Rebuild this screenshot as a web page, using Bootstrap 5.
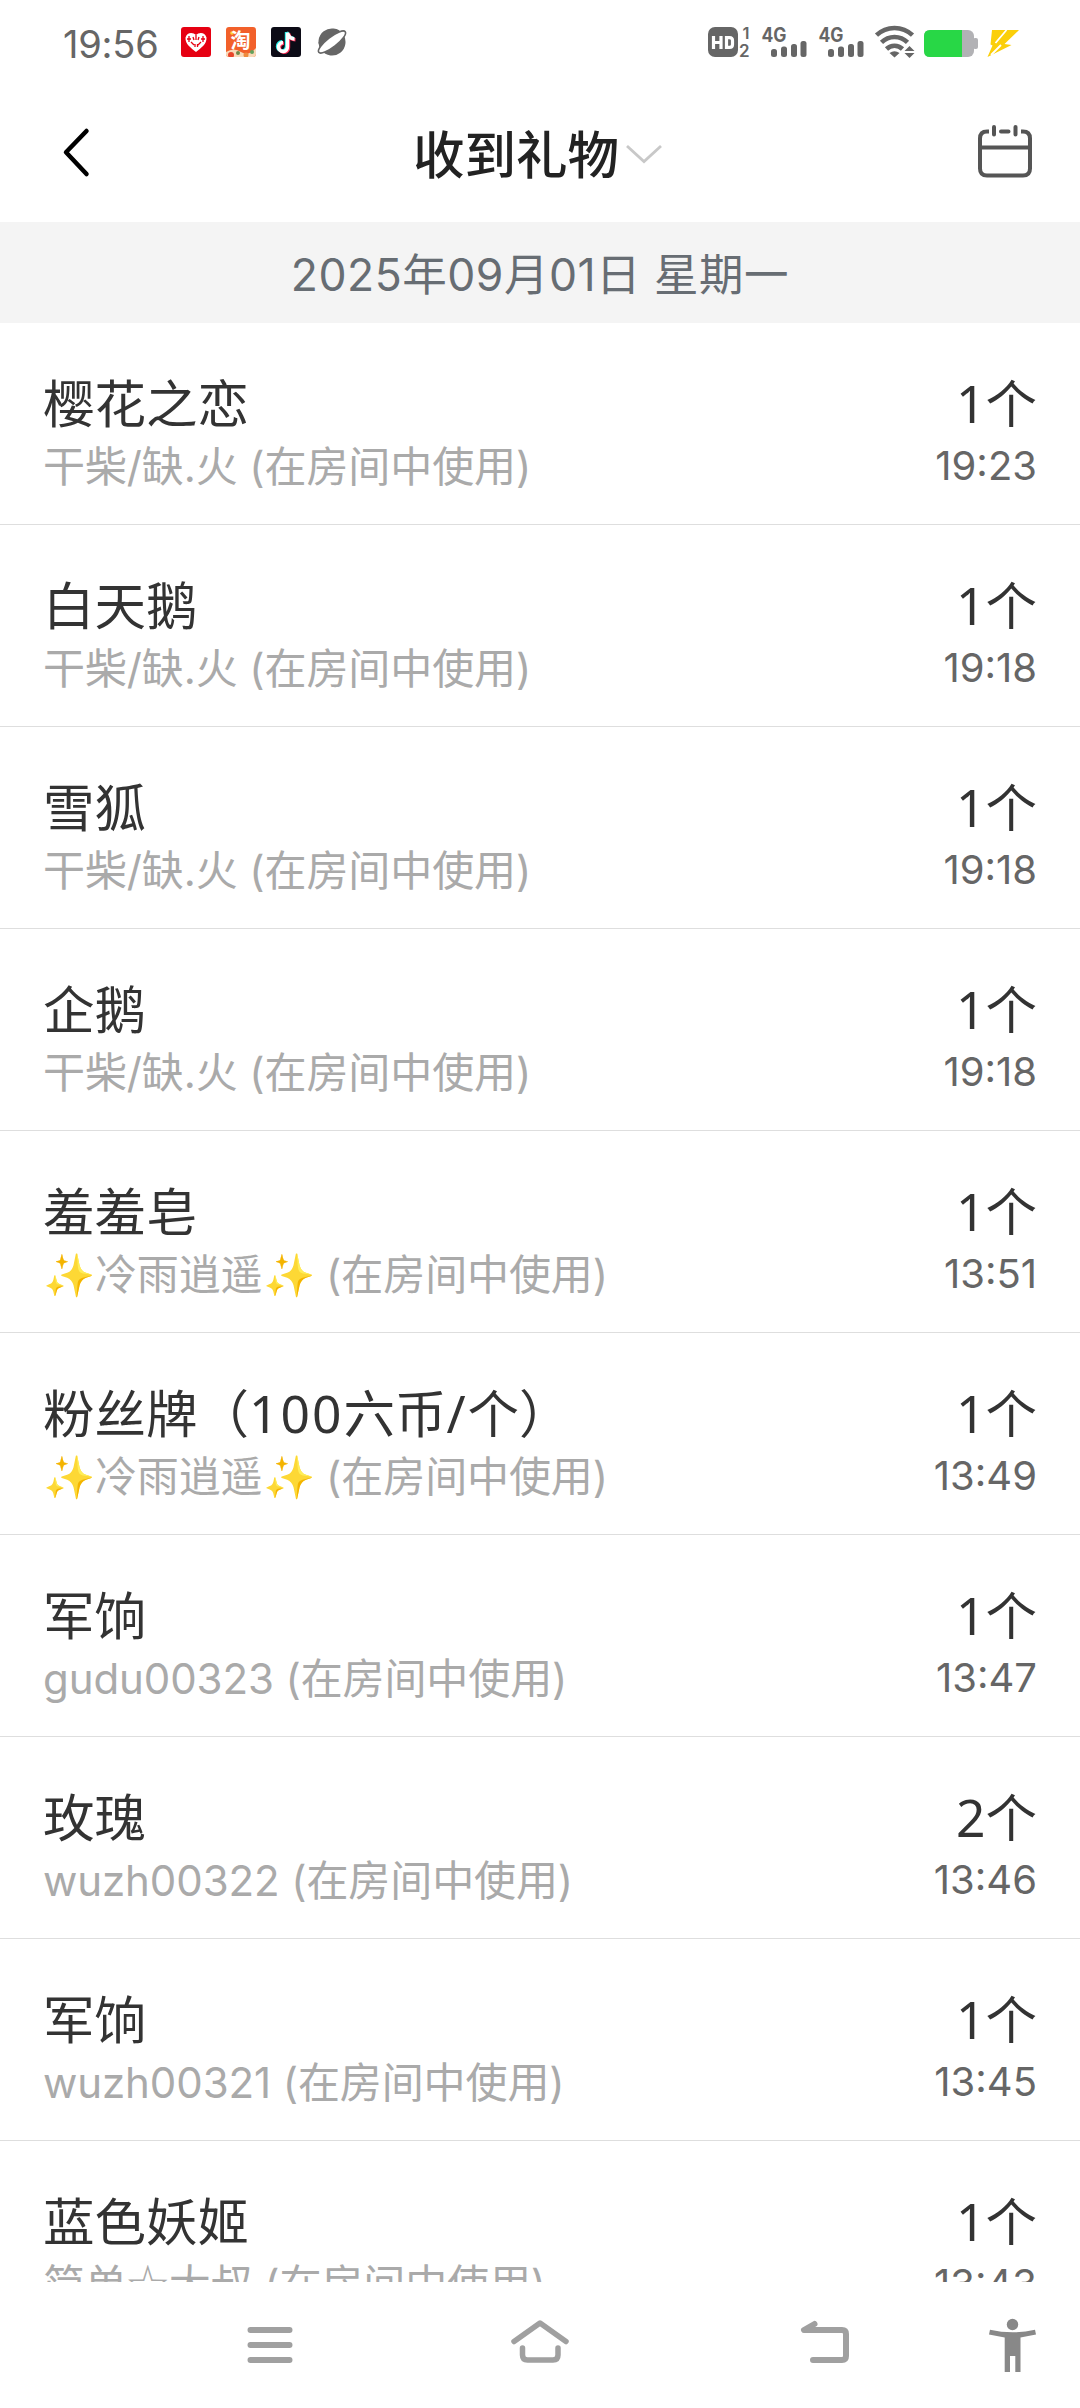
<!DOCTYPE html>
<html lang="zh-CN">
<head>
<meta charset="utf-8">
<meta name="viewport" content="width=device-width, initial-scale=1">
<title>收到礼物</title>
<link rel="stylesheet" href="https://cdn.jsdelivr.net/npm/bootstrap@5.3.0/dist/css/bootstrap.min.css">
<style>
  body { font-family: Inter, "Noto Sans CJK SC", sans-serif; background: #fff; }
  .screen { width: 1080px; height: 2408px; }
  .screen svg { display: block; flex: none; }
  .status-bar { height: 84px; padding: 0 61px 0 63px; color: #666; }
  .clock { font-size: 38px; line-height: 84px; letter-spacing: -.2px; margin-top: 3px; width: 118px; }
  .app-icons { gap: 15px; }
  .topbar { height: 138px; padding: 0 46px 0 56px; }
  .title-menu { padding: 4px 14px 0 0; }
  .page-title { font-size: 51.5px; font-weight: 500; line-height: 70px; color: #222; }
  .date-bar { height: 101px; background: #f4f4f4; color: #676d73; font-size: 44.5px; letter-spacing: .5px; line-height: 106px; }
  .gift-row { height: 202px; padding: 44px 43px 0; border-bottom: 1px solid #dedede; }
  .gift-name, .gift-count { font-family: "Noto Sans", "Noto Sans CJK SC", sans-serif; font-size: 51.5px; line-height: 72px; color: #333; }
  .wide-digits { letter-spacing: 2px; }
  .gift-from { font-size: 42px; letter-spacing: -.1px; line-height: 56px; color: #aaa; }
  .star-mark { font-family: "Noto Sans CJK SC", sans-serif; line-height: 1; }
  .gift-time { font-size: 40px; line-height: 53px; color: #666; }
  .nav-keys { height: 126px; }
</style>
</head>
<body>
<div class="screen d-flex flex-column overflow-hidden">
  <header class="status-bar d-flex align-items-center flex-shrink-0">
    <div class="clock">19:56</div>
    <div class="app-icons d-flex me-auto">
      <svg width="30" height="30" viewBox="0 0 30 30"><rect width="30" height="30" rx="3" fill="#e60012"/><path d="M15 25C10 21 4 17 4.500 10.500C6 5 12 5 15 8C18 5 24 5 25.500 10.500C26 17 20 21 15 25Z" fill="#fff"/><path d="M6 12H10M8 9V15M10 15L13 18M20 12H24M22 9V15M20 15L17 18M15 8V13M12 10L13 13M18 10L17 13M14 17V20M16.500 17V20" stroke="#e60012" stroke-width="1.300"/></svg>
      <svg width="30" height="30" viewBox="0 0 30 30"><defs><clipPath id="tb"><rect width="30" height="30" rx="3"/></clipPath></defs><g clip-path="url(#tb)"><rect width="30" height="30" fill="#f2602a"/><path d="M0 25Q8 20 15 25T30 21V30H0Z" fill="#f9d9b8"/><circle cx="5" cy="28" r="3" fill="#e8452a"/><circle cx="12" cy="26" r="2" fill="#6f8b4a"/><circle cx="20" cy="28" r="2.500" fill="#ef8a3c"/><circle cx="26" cy="25" r="2" fill="#62a15c"/><circle cx="6" cy="6" r="1.800" fill="#ffd33c"/><text x="4.500" y="20.500" font-size="20" font-weight="700" fill="#fff">淘</text></g></svg>
      <svg width="30" height="30" viewBox="0 0 30 30"><rect width="30" height="30" rx="3" fill="#0c0b16"/><g fill="none" stroke-width="3.400"><path d="M15.500 5V19A4.500 4.500 0 1 1 11 14.800M15.500 5Q17 11 22.500 11.300" stroke="#25f4ee"/><path d="M17.500 6.500V20.500A4.500 4.500 0 1 1 13 16.300M17.500 6.500Q19 12.500 24.500 12.800" stroke="#fe2c55"/><path d="M16.500 5.700V19.700A4.500 4.500 0 1 1 12 15.500M16.500 5.700Q18 11.700 23.500 12" stroke="#fff"/></g></svg>
      <svg width="32" height="30" viewBox="0 0 32 30"><g transform="rotate(-38 16 15)"><circle cx="16" cy="15" r="13.500" fill="#666"/><ellipse cx="16" cy="15" rx="16.800" ry="5" fill="#fff" stroke="#666" stroke-width="1.600"/><path d="M3.500 10.500Q16 6.500 28.500 10.500L27 7H5Z" fill="#666"/></g></svg>
    </div>
    <svg width="312" height="50" viewBox="0 -8 312 50" fill="#666">
      <rect x="1" y="2" width="30" height="30" rx="7"/>
      <g fill="none" stroke="#fff" stroke-width="3.200"><path d="M6.500 11V24M14 11V24M6.500 17.500H14M19.500 12.600H22.500Q25.500 12.600 25.500 15.500V19.500Q25.500 22.400 22.500 22.400H19.500Z"/></g>
      <g font-weight="600" font-size="16.500"><text x="35.500" y="14">1</text><text x="32" y="32" font-size="17">2</text></g>
      <g id="sig"><text x="54.500" y="16.500" font-size="19.500" font-weight="700" textLength="25" lengthAdjust="spacingAndGlyphs">4G</text><rect x="64" y="24" width="6" height="8" rx="2.500"/><rect x="74" y="21.500" width="6" height="10.500" rx="2.500"/><rect x="84" y="19" width="6" height="13" rx="2.500"/><rect x="93.500" y="16" width="6" height="16" rx="2.500"/></g>
      <g transform="translate(57 0)"><text x="54.500" y="16.500" font-size="19.500" font-weight="700" textLength="25" lengthAdjust="spacingAndGlyphs">4G</text><rect x="64" y="24" width="6" height="8" rx="2.500"/><rect x="74" y="21.500" width="6" height="10.500" rx="2.500"/><rect x="84" y="19" width="6" height="13" rx="2.500"/><rect x="93.500" y="16" width="6" height="16" rx="2.500"/></g>
      <g fill="none" stroke="#666" stroke-width="4.600"><path d="M169.500 10.200A26 26 0 0 1 205.500 10.200M174.500 17.300A18.500 18.500 0 0 1 200.500 17.300M179.500 24A11.500 11.500 0 0 1 195.500 24"/></g>
      <path d="M182.500 28Q187.500 24.500 192.500 28L187.500 32.500ZM202.500 21L207.500 26H197.500ZM202.500 33L207.500 28H197.500Z"/>
      <rect x="217" y="5" width="50" height="27" rx="6" fill="#b2b2b5"/><rect x="266" y="13" width="5" height="11" rx="2" fill="#b2b2b5"/>
      <path d="M223 5H255V32H223Q217 32 217 26V11Q217 5 223 5Z" fill="#28d746"/>
      <path d="M285 5H312L297.500 19L304.500 20L280.500 32L285.500 20.500L283.500 19.500Z" fill="#fbcf0a"/>
      <path d="M299.500 5L288.500 18M294 20L284 30" stroke="#fff" stroke-width="1.800"/>
    </svg>
  </header>

  <nav class="topbar d-flex align-items-center justify-content-between flex-shrink-0">
    <svg width="60" height="60" viewBox="0 0 60 60"><path d="M30.500 8L10 29.200L30.500 51" fill="none" stroke="#000" stroke-width="4.500" stroke-linecap="round" stroke-linejoin="round"/></svg>
    <div class="title-menu d-flex align-items-center">
      <span class="page-title">收到礼物</span>
      <svg width="44" height="24" viewBox="0 0 44 24"><path d="M8 3L25 18.500L42 3" fill="none" stroke="#c8c8c8" stroke-width="2.800"/></svg>
    </div>
    <svg width="60" height="60" viewBox="0 0 60 60" fill="none" stroke="#555" stroke-width="4"><path d="M15 8.500H13Q6 8.500 6 15.500V45.500Q6 52.500 13 52.500H49Q56 52.500 56 45.500V15.500Q56 8.500 49 8.500H47M6 24.500H56"/><path d="M20 4V11.500M41.500 4V11.500M27 8.500H34.500" stroke-linecap="round"/></svg>
  </nav>

  <div class="date-bar text-center flex-shrink-0">2025年09月01日 星期一</div>

  <main class="flex-grow-1 overflow-hidden">
    <div class="gift-row d-flex justify-content-between"><div><div class="gift-name">樱花之恋</div><div class="gift-from">干柴/缺.火 (在房间中使用)</div></div><div class="text-end"><div class="gift-count">1个</div><div class="gift-time">19:23</div></div></div>
    <div class="gift-row d-flex justify-content-between"><div><div class="gift-name">白天鹅</div><div class="gift-from">干柴/缺.火 (在房间中使用)</div></div><div class="text-end"><div class="gift-count">1个</div><div class="gift-time">19:18</div></div></div>
    <div class="gift-row d-flex justify-content-between"><div><div class="gift-name">雪狐</div><div class="gift-from">干柴/缺.火 (在房间中使用)</div></div><div class="text-end"><div class="gift-count">1个</div><div class="gift-time">19:18</div></div></div>
    <div class="gift-row d-flex justify-content-between"><div><div class="gift-name">企鹅</div><div class="gift-from">干柴/缺.火 (在房间中使用)</div></div><div class="text-end"><div class="gift-count">1个</div><div class="gift-time">19:18</div></div></div>
    <div class="gift-row d-flex justify-content-between"><div><div class="gift-name">羞羞皂</div><div class="gift-from">✨冷雨逍遥✨ (在房间中使用)</div></div><div class="text-end"><div class="gift-count">1个</div><div class="gift-time">13:51</div></div></div>
    <div class="gift-row d-flex justify-content-between"><div><div class="gift-name">粉丝牌（<span class="wide-digits">100</span>六币<span class="wide-digits">/</span>个）</div><div class="gift-from">✨冷雨逍遥✨ (在房间中使用)</div></div><div class="text-end"><div class="gift-count">1个</div><div class="gift-time">13:49</div></div></div>
    <div class="gift-row d-flex justify-content-between"><div><div class="gift-name">军饷</div><div class="gift-from">gudu00323 (在房间中使用)</div></div><div class="text-end"><div class="gift-count">1个</div><div class="gift-time">13:47</div></div></div>
    <div class="gift-row d-flex justify-content-between"><div><div class="gift-name">玫瑰</div><div class="gift-from">wuzh00322 (在房间中使用)</div></div><div class="text-end"><div class="gift-count">2个</div><div class="gift-time">13:46</div></div></div>
    <div class="gift-row d-flex justify-content-between"><div><div class="gift-name">军饷</div><div class="gift-from">wuzh00321 (在房间中使用)</div></div><div class="text-end"><div class="gift-count">1个</div><div class="gift-time">13:45</div></div></div>
    <div class="gift-row d-flex justify-content-between"><div><div class="gift-name">蓝色妖姬</div><div class="gift-from">简单<span class="star-mark">☆</span>大叔 (在房间中使用)</div></div><div class="text-end"><div class="gift-count">1个</div><div class="gift-time">13:43</div></div></div>
  </main>

  <footer class="nav-keys flex-shrink-0 bg-white">
    <svg width="1080" height="126" viewBox="0 2282 1080 126" fill="none" stroke="#a0a0a0" stroke-width="6" stroke-linecap="round" stroke-linejoin="round">
      <path d="M250.500 2330H289.500M250.500 2345H289.500M250.500 2360H289.500"/>
      <path d="M514 2341.500L540 2323L566 2341.500M522.500 2348V2355Q522.500 2360 527.500 2360H553Q558 2360 558 2355V2348" stroke-width="5.500"/>
      <path d="M814.500 2324L804 2330H842Q846 2330 846 2334V2356Q846 2360 842 2360H813"/>
      <g fill="#888" stroke="none"><circle cx="1012.500" cy="2324.500" r="5.700"/><path d="M990 2329.700Q1012.500 2335 1035 2329.700L1036 2334.500L1020.500 2337.500V2372H1015.300V2356H1010V2372H1004.700V2337.500L989 2334.500Z"/></g>
    </svg>
  </footer>
</div>
<script src="https://cdn.jsdelivr.net/npm/bootstrap@5.3.0/dist/js/bootstrap.bundle.min.js"></script>
</body>
</html>
